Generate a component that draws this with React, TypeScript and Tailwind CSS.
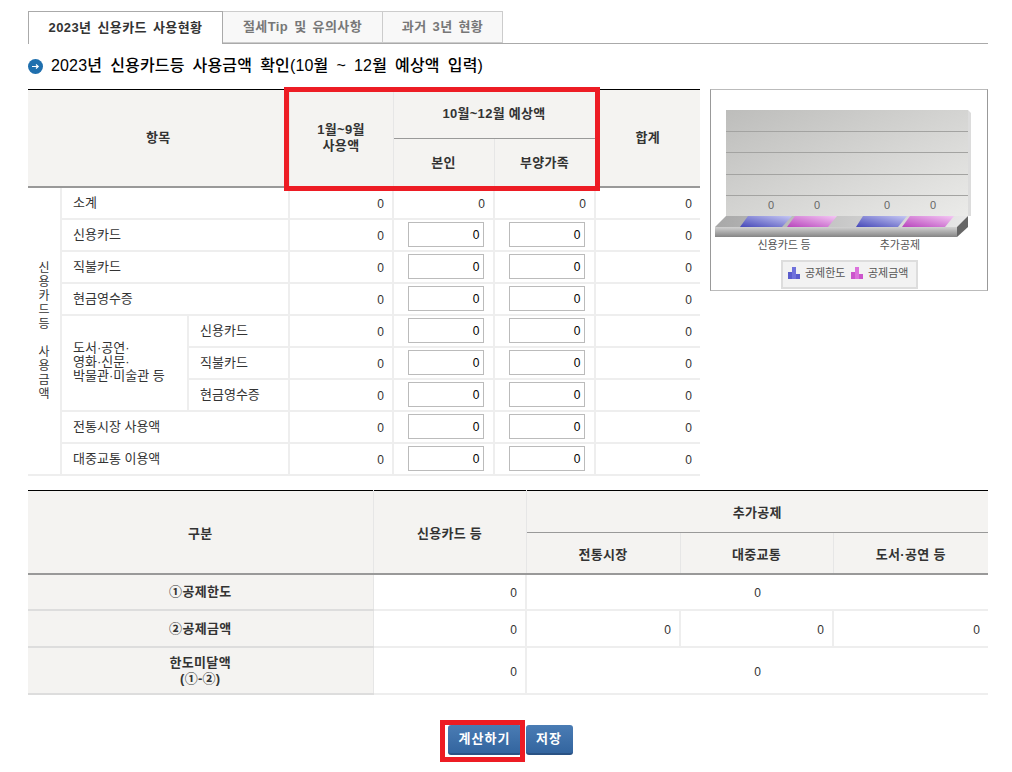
const font = "[font-family:'Liberation_Sans','Noto_Sans_CJK_KR',sans-serif]";

const th = "border-b border-r border-[#e6e6e6] bg-[#f4f3f1] text-center align-middle text-[13px] font-bold tracking-[0.3px] text-[#333]";
const th2 = th + " pt-[3px]";
const cell = "border-b-2 border-r-2 border-[#eeeeee] text-[#333] align-middle";
const td = cell + " text-[13px]";
const label = td + " pl-[11px] pt-[1px]";
const num = cell + " text-right text-[12px] pr-[8px] pt-[2px]";

function Money() {
  return (
    <div className="flex justify-center pl-[4px]">
      <input
        readOnly
        value="0"
        className="h-[25px] w-[76px] border border-[#bbbbbb] bg-white pr-[3px] text-right text-[12px] text-black outline-none"
      />
    </div>
  );
}

function InputRow({ name, sub }: { name?: string; sub?: string }) {
  return (
    <>
      {name ? <td colSpan={2} className={label}>{name}</td> : null}
      {sub ? <td className={label}>{sub}</td> : null}
      <td className={num}>0</td>
      <td className={cell}><Money /></td>
      <td className={cell}><Money /></td>
      <td className={num + " border-r-0!"}>0</td>
    </>
  );
}

function LegendIcon({ x, color, light }: { x: number; color: string; light: string }) {
  return (
    <g>
      <rect x={x} y={182} width={4} height={7} fill={color} />
      <rect x={x + 4} y={177} width={4} height={12} fill={light} />
      <rect x={x + 8} y={184} width={4} height={5} fill={color} />
    </g>
  );
}

function Chart() {
  return (
    <svg width="276" height="200" viewBox="0 0 276 200" className="block">
      <defs>
        <linearGradient id="wall" x1="0" y1="0" x2="1" y2="1">
          <stop offset="0" stopColor="#bdbdbb" />
          <stop offset="1" stopColor="#ebebe9" />
        </linearGradient>
        <linearGradient id="floor" x1="0" y1="0" x2="1" y2="0">
          <stop offset="0" stopColor="#a8a8a8" />
          <stop offset="1" stopColor="#e8e8e8" />
        </linearGradient>
        <linearGradient id="front" x1="0" y1="0" x2="0" y2="1">
          <stop offset="0" stopColor="#d2d2d2" />
          <stop offset="1" stopColor="#858585" />
        </linearGradient>
        <linearGradient id="blue" x1="0" y1="1" x2="1" y2="0">
          <stop offset="0" stopColor="#4648b8" />
          <stop offset="1" stopColor="#c6c8f4" />
        </linearGradient>
        <linearGradient id="pink" x1="0" y1="1" x2="1" y2="0">
          <stop offset="0" stopColor="#b844bc" />
          <stop offset="1" stopColor="#f4c8f4" />
        </linearGradient>
      </defs>
      <rect x="15" y="20" width="242" height="106" fill="url(#wall)" />
      <path d="M257 20l3 3v103h-3z" fill="#dcdcdc" />
      {[41, 62, 84, 105].map((y) => (
        <rect key={y} x="15" y={y} width="242" height="1" fill="#a3a3a1" />
      ))}
      <path d="M4 137L15 126H257L246 137Z" fill="url(#floor)" />
      <rect x="4" y="137" width="242" height="10" fill="url(#front)" />
      <path d="M246 137L257 126V137L246 147Z" fill="#666" />
      <path d="M29 137L37 126H81L71 137Z" fill="url(#blue)" />
      <path d="M76 137L84 126H126L117 137Z" fill="url(#pink)" />
      <path d="M145 137L152 126H196L187 137Z" fill="url(#blue)" />
      <path d="M191 137L199 126H243L234 137Z" fill="url(#pink)" />
      <g fontSize="11" fill="#666" textAnchor="middle" fontFamily="'Liberation Sans', sans-serif">
        <text x="60" y="119">0</text>
        <text x="106" y="119">0</text>
        <text x="176" y="119">0</text>
        <text x="222" y="119">0</text>
      </g>
      <g fontSize="11" fill="#555" textAnchor="middle" fontFamily="'Noto Sans CJK KR', sans-serif">
        <text x="73" y="159">신용카드 등</text>
        <text x="189" y="159">추가공제</text>
      </g>
      <rect x="71" y="171" width="135" height="27" fill="#f2f2f2" stroke="#dddddd" strokeWidth="2" />
      <LegendIcon x={77} color="#5a5ccc" light="#7072dc" />
      <LegendIcon x={140} color="#cc55cc" light="#dc72dc" />
      <g fontSize="11" fill="#555" fontFamily="'Noto Sans CJK KR', sans-serif">
        <text x="94" y="187">공제한도</text>
        <text x="157" y="187">공제금액</text>
      </g>
    </svg>
  );
}

function Buttons() {
  const btn = "h-[30px] rounded-[3px] bg-gradient-to-b from-[#4a7cb4] to-[#33659f] border-b-2 border-[#2a5284] text-[13px] font-bold tracking-[1px] text-white";
  return (
    <div className="mt-[30px] flex justify-center gap-[4px] pl-[4px]">
      <div className="relative">
        <button type="button" className={btn + " w-[74px]"}>계산하기</button>
        <div className="pointer-events-none absolute left-[-8px] top-[-5px] h-[42px] w-[85px] border-[5px] border-[#ed1c24]" />
      </div>
      <button type="button" className={btn + " w-[47px]"}>저장</button>
    </div>
  );
}

export default function App() {
  const tabOff = "flex h-[32px] items-center justify-center border-y border-r border-[#cccccc] bg-[#f8f8f8] text-[13px] font-bold tracking-[0.4px] [word-spacing:2px] text-[#777]";
  return (
    <div className={font + " h-[772px] w-[1012px] overflow-hidden bg-white pl-[28px] pr-[24px] pt-[11px]"}>
      {/* tabs */}
      <div className="flex h-[33px] border-b border-[#aaaaaa]">
        <div className="-mb-px flex h-[33px] w-[195px] items-center justify-center border border-b-0 border-[#aaaaaa] bg-white text-[13px] font-bold tracking-[0.4px] [word-spacing:2px] text-[#333]">
          2023년 신용카드 사용현황
        </div>
        <div className={tabOff + " w-[160px]"}>절세Tip 및 유의사항</div>
        <div className={tabOff + " w-[120px]"}>과거 3년 현황</div>
      </div>

      <div className="mt-[13px] flex h-[18px] items-center gap-[8px]">
        <svg width="15" height="15" viewBox="0 0 15 15">
          <circle cx="7.5" cy="7.5" r="7.5" fill="#1f6fae" />
          <path d="M4 7.5h6M8 5.5l2.2 2-2.2 2" fill="none" stroke="#fff" strokeWidth="1.2" />
        </svg>
        <h2 className="text-[16px] font-medium tracking-[0.15px] [word-spacing:3.5px] text-black">
          2023년 신용카드등 사용금액 확인(10월 ~ 12월 예상액 입력)
        </h2>
      </div>

      {/* first table and chart */}
      <div className="mt-[14px] flex items-start gap-[10px]">
        <div className="relative w-[672px] shrink-0">
          <table className="w-[672px] table-fixed border-collapse">
            <colgroup>
              <col className="w-[33px]" />
              <col className="w-[127px]" />
              <col className="w-[101px]" />
              <col className="w-[104px]" />
              <col className="w-[101px]" />
              <col className="w-[101px]" />
              <col className="w-[105px]" />
            </colgroup>
            <tbody>
              <tr className="h-[49px] border-t border-black">
                <th colSpan={3} rowSpan={2} className={th + " border-b-2 border-b-[#999]"}>항목</th>
                <th rowSpan={2} className={th + " border-b-2 border-b-[#999] leading-[16px]"}>1월~9월<br />사용액</th>
                <th colSpan={2} className={th + " border-b-[#999]"}>10월~12월 예상액</th>
                <th rowSpan={2} className={th + " border-b-2 border-b-[#999] border-r-0!"}>합계</th>
              </tr>
              <tr className="h-[48px]">
                <th className={th + " border-b-2 border-b-[#999]"}>본인</th>
                <th className={th + " border-b-2 border-b-[#999]"}>부양가족</th>
              </tr>
              <tr className="h-[32px]">
                <td rowSpan={9} className={cell + " text-center text-[12px] leading-[14px]"}>
                  신<br />용<br />카<br />드<br />등<br /><br />사<br />용<br />금<br />액
                </td>
                <td colSpan={2} className={label}>소계</td>
                <td className={num}>0</td>
                <td className={num}>0</td>
                <td className={num}>0</td>
                <td className={num + " border-r-0!"}>0</td>
              </tr>
              <tr className="h-[32px]"><InputRow name="신용카드" /></tr>
              <tr className="h-[32px]"><InputRow name="직불카드" /></tr>
              <tr className="h-[32px]"><InputRow name="현금영수증" /></tr>
              <tr className="h-[32px]">
                <td rowSpan={3} className={td + " pl-[11px] pb-[2px] leading-[14px]"}>
                  도서·공연·<br />영화·신문·<br />박물관·미술관 등
                </td>
                <InputRow sub="신용카드" />
              </tr>
              <tr className="h-[32px]"><InputRow sub="직불카드" /></tr>
              <tr className="h-[32px]"><InputRow sub="현금영수증" /></tr>
              <tr className="h-[32px]"><InputRow name="전통시장 사용액" /></tr>
              <tr className="h-[32px]"><InputRow name="대중교통 이용액" /></tr>
            </tbody>
          </table>
          <div className="pointer-events-none absolute left-[256px] top-[-2px] h-[104px] w-[316px] border-[5px] border-[#ed1c24]" />
        </div>
        <div className="h-[202px] w-[278px] shrink-0 border border-[#bbbbbb] border-x-[#999]">
          <Chart />
        </div>
      </div>

      {/* second table */}
      <table className="mt-[14px] w-[960px] table-fixed border-collapse">
        <colgroup>
          <col className="w-[345px]" />
          <col className="w-[153px]" />
          <col className="w-[154px]" />
          <col className="w-[153px]" />
          <col className="w-[155px]" />
        </colgroup>
        <tbody>
          <tr className="h-[42px] border-t border-black">
            <th rowSpan={2} className={th2 + " border-b-2 border-b-[#999]"}>구분</th>
            <th rowSpan={2} className={th2 + " border-b-2 border-b-[#999]"}>신용카드 등</th>
            <th colSpan={3} className={th2 + " border-b-[#999] border-r-0!"}>추가공제</th>
          </tr>
          <tr className="h-[42px]">
            <th className={th2 + " border-b-2 border-b-[#999]"}>전통시장</th>
            <th className={th2 + " border-b-2 border-b-[#999]"}>대중교통</th>
            <th className={th2 + " border-b-2 border-b-[#999] border-r-0!"}>도서·공연 등</th>
          </tr>
          <tr className="h-[36px]">
            <th className={th + " border-b-2 border-b-[#ddd]"}>①공제한도</th>
            <td className={num}>0</td>
            <td colSpan={3} className={num + " border-r-0! text-center! pr-0!"}>0</td>
          </tr>
          <tr className="h-[37px]">
            <th className={th + " border-b-2 border-b-[#ddd]"}>②공제금액</th>
            <td className={num}>0</td>
            <td className={num}>0</td>
            <td className={num}>0</td>
            <td className={num + " border-r-0!"}>0</td>
          </tr>
          <tr className="h-[47px]">
            <th className={th + " border-b-2 border-b-[#ddd] leading-[16px]"}>한도미달액<br />(①-②)</th>
            <td className={num}>0</td>
            <td colSpan={3} className={num + " border-r-0! text-center! pr-0!"}>0</td>
          </tr>
        </tbody>
      </table>

      <Buttons />
    </div>
  );
}
